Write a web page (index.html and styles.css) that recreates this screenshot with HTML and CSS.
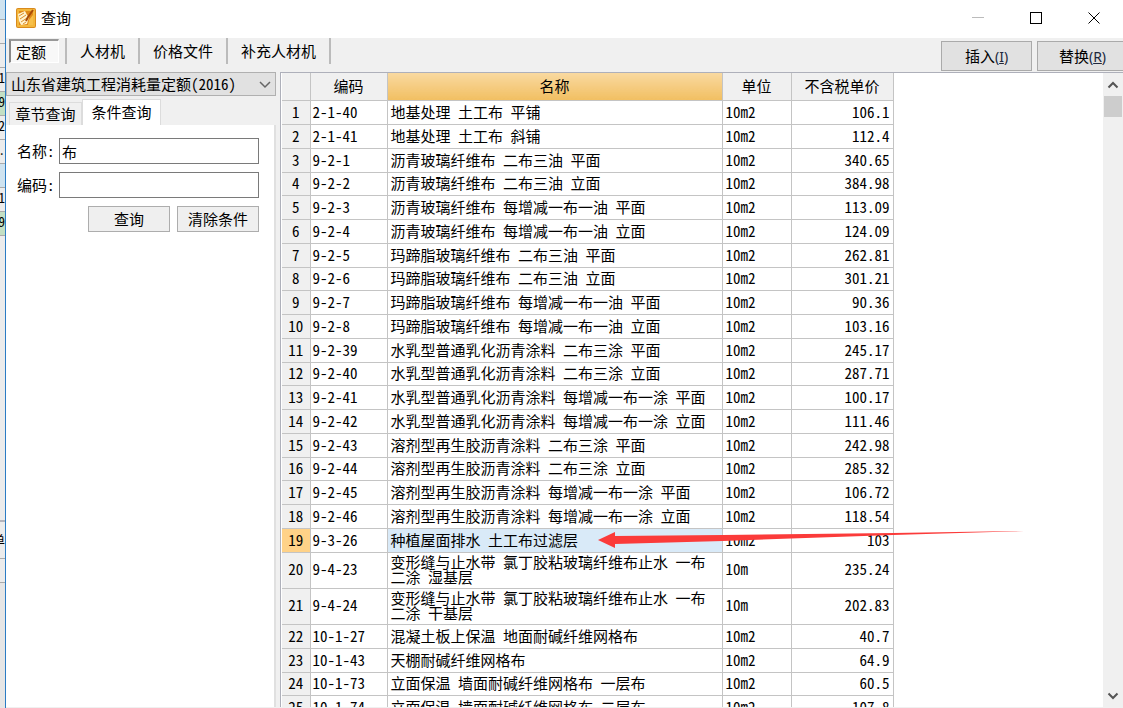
FILE: index.html
```html
<!DOCTYPE html>
<html lang="zh-CN">
<head>
<meta charset="utf-8">
<title>查询</title>
<link rel="stylesheet" href="styles.css">
</head>
<body>
<div class="backdrop" aria-hidden="true">
  <div class="slot blue first"></div>
  <div class="slot"></div>
  <div class="slot"></div>
  <div class="slot">1</div>
  <div class="slot green">9</div>
  <div class="slot">2</div>
  <div class="slot">.</div>
  <div class="slot blue"></div>
  <div class="slot">1</div>
  <div class="slot green">9</div>
  <div class="filler"></div>
  <div class="slot tall">单</div>
  <div class="slot"></div>
  <div class="foot"></div>
</div>
<main class="window">
  <header class="titlebar">
    <svg class="app-icon" viewBox="0 0 20 20">
      <rect x="0" y="0" width="20" height="20" rx="2" fill="#d98a1c"/>
      <rect x="1" y="1" width="18" height="18" rx="1" fill="#f3b73c"/>
      <path d="M3 3H17V17H3Z" fill="#e08a18"/>
      <path d="M2 6L9 3L11 7L13 9L11 16L5 17L3 13Z" fill="#fff3cf"/>
      <path d="M3 8L8 5M4 11L10 7M5 14L11 10M7 16L10 14" stroke="#dc8f2a" stroke-width="1" fill="none"/>
      <path d="M17 2L12 9L10 13" stroke="#a84c08" stroke-width="2" fill="none"/>
      <path d="M13 12L17 7V17H12Z" fill="#f7c04a"/>
    </svg>
    <h1 class="title">查询</h1>
    <div class="controls">
      <button class="control" aria-label="最小化" disabled><svg viewBox="0 0 12 12"><path d="M0 5.500H12" stroke="#bbb"/></svg></button>
      <button class="control" aria-label="最大化"><svg viewBox="0 0 12 12"><rect x=".5" y=".5" width="11" height="11" fill="none" stroke="#000"/></svg></button>
      <button class="control" aria-label="关闭"><svg viewBox="0 0 12 12"><path d="M.5 .5L11.500 11.500M11.500 .5L.5 11.500" stroke="#000"/></svg></button>
    </div>
  </header>
  <nav class="toolbar">
    <div class="modes">
      <button class="mode active">定额</button>
      <button class="mode">人材机</button>
      <button class="mode">价格文件</button>
      <button class="mode">补充人材机</button>
    </div>
    <div class="actions">
      <button class="button action">插入<span class="key">(<u>I</u>)</span></button>
      <button class="button action">替换<span class="key">(<u>R</u>)</span></button>
    </div>
  </nav>
  <div class="content">
    <aside class="side">
      <div class="library">
        <select class="library-select" aria-label="定额库"><option>山东省建筑工程消耗量定额(2016)</option></select>
        <svg class="library-arrow" viewBox="0 0 12 8"><path d="M1 1L6 6L11 1" fill="none" stroke="#666" stroke-width="1.500"/></svg>
      </div>
      <div class="tabs">
        <button class="tab">章节查询</button>
        <button class="tab current">条件查询</button>
      </div>
      <form class="panel">
        <div class="field"><label for="name">名称:</label><input id="name" type="text" value="布"></div>
        <div class="field"><label for="code">编码:</label><input id="code" type="text"></div>
        <div class="form-actions">
          <button type="button" class="button">查询</button>
          <button type="button" class="button">清除条件</button>
        </div>
      </form>
    </aside>
    <section class="results">
      <div class="grid">
        <table class="items">
          <colgroup><col class="c-no"><col class="c-code"><col class="c-name"><col class="c-unit"><col class="c-price"></colgroup>
          <thead><tr><th></th><th>编码</th><th class="sorted">名称</th><th>单位</th><th>不含税单价</th></tr></thead>
          <tbody>
            <tr><th>1</th><td>2-1-40</td><td>地基处理 土工布 平铺</td><td>10m2</td><td>106.1</td></tr>
            <tr><th>2</th><td>2-1-41</td><td>地基处理 土工布 斜铺</td><td>10m2</td><td>112.4</td></tr>
            <tr><th>3</th><td>9-2-1</td><td>沥青玻璃纤维布 二布三油 平面</td><td>10m2</td><td>340.65</td></tr>
            <tr><th>4</th><td>9-2-2</td><td>沥青玻璃纤维布 二布三油 立面</td><td>10m2</td><td>384.98</td></tr>
            <tr><th>5</th><td>9-2-3</td><td>沥青玻璃纤维布 每增减一布一油 平面</td><td>10m2</td><td>113.09</td></tr>
            <tr><th>6</th><td>9-2-4</td><td>沥青玻璃纤维布 每增减一布一油 立面</td><td>10m2</td><td>124.09</td></tr>
            <tr><th>7</th><td>9-2-5</td><td>玛蹄脂玻璃纤维布 二布三油 平面</td><td>10m2</td><td>262.81</td></tr>
            <tr><th>8</th><td>9-2-6</td><td>玛蹄脂玻璃纤维布 二布三油 立面</td><td>10m2</td><td>301.21</td></tr>
            <tr><th>9</th><td>9-2-7</td><td>玛蹄脂玻璃纤维布 每增减一布一油 平面</td><td>10m2</td><td>90.36</td></tr>
            <tr><th>10</th><td>9-2-8</td><td>玛蹄脂玻璃纤维布 每增减一布一油 立面</td><td>10m2</td><td>103.16</td></tr>
            <tr><th>11</th><td>9-2-39</td><td>水乳型普通乳化沥青涂料 二布三涂 平面</td><td>10m2</td><td>245.17</td></tr>
            <tr><th>12</th><td>9-2-40</td><td>水乳型普通乳化沥青涂料 二布三涂 立面</td><td>10m2</td><td>287.71</td></tr>
            <tr><th>13</th><td>9-2-41</td><td>水乳型普通乳化沥青涂料 每增减一布一涂 平面</td><td>10m2</td><td>100.17</td></tr>
            <tr><th>14</th><td>9-2-42</td><td>水乳型普通乳化沥青涂料 每增减一布一涂 立面</td><td>10m2</td><td>111.46</td></tr>
            <tr><th>15</th><td>9-2-43</td><td>溶剂型再生胶沥青涂料 二布三涂 平面</td><td>10m2</td><td>242.98</td></tr>
            <tr><th>16</th><td>9-2-44</td><td>溶剂型再生胶沥青涂料 二布三涂 立面</td><td>10m2</td><td>285.32</td></tr>
            <tr><th>17</th><td>9-2-45</td><td>溶剂型再生胶沥青涂料 每增减一布一涂 平面</td><td>10m2</td><td>106.72</td></tr>
            <tr><th>18</th><td>9-2-46</td><td>溶剂型再生胶沥青涂料 每增减一布一涂 立面</td><td>10m2</td><td>118.54</td></tr>
            <tr class="selected"><th>19</th><td>9-3-26</td><td>种植屋面排水 土工布过滤层</td><td>10m2</td><td>103</td></tr>
            <tr class="double"><th>20</th><td>9-4-23</td><td>变形缝与止水带 氯丁胶粘玻璃纤维布止水 一布二涂 湿基层</td><td>10m</td><td>235.24</td></tr>
            <tr class="double"><th>21</th><td>9-4-24</td><td>变形缝与止水带 氯丁胶粘玻璃纤维布止水 一布二涂 干基层</td><td>10m</td><td>202.83</td></tr>
            <tr><th>22</th><td>10-1-27</td><td>混凝土板上保温 地面耐碱纤维网格布</td><td>10m2</td><td>40.7</td></tr>
            <tr><th>23</th><td>10-1-43</td><td>天棚耐碱纤维网格布</td><td>10m2</td><td>64.9</td></tr>
            <tr><th>24</th><td>10-1-73</td><td>立面保温 墙面耐碱纤维网格布 一层布</td><td>10m2</td><td>60.5</td></tr>
            <tr><th>25</th><td>10-1-74</td><td>立面保温 墙面耐碱纤维网格布 二层布</td><td>10m2</td><td>107.8</td></tr>
          </tbody>
        </table>
      </div>
      <div class="scrollbar">
        <button class="scroll-step" aria-label="向上"><svg viewBox="0 0 12 8"><path d="M1.500 6.500L6 2L10.500 6.500" fill="none" stroke="#555" stroke-width="2"/></svg></button>
        <div class="thumb"></div>
        <button class="scroll-step end" aria-label="向下"><svg viewBox="0 0 12 8"><path d="M1.500 1.500L6 6L10.500 1.500" fill="none" stroke="#555" stroke-width="2"/></svg></button>
      </div>
    </section>
  </div>
</main>
<svg class="pointer" viewBox="0 0 426 18" aria-hidden="true"><path d="M0 9L17 1V5L125 4L295 2L426 0L295 4L125 10L17 13V17Z" fill="#fb3b3a"/></svg>
</body>
</html>
```
FILE: styles.css
```css
* { box-sizing: border-box; }

body {
  margin: 0;
  height: 100vh;
  display: flex;
  position: relative;
  overflow: hidden;
  background: #f0f0f0;
  color: #000;
  font-family: "Noto Sans Mono CJK SC", "Noto Sans CJK SC", "Liberation Mono", monospace;
  font-size: 15px;
  line-height: 20px;
}

button, input, select { font: inherit; color: inherit; margin: 0; border-radius: 0; }
button { padding: 0; border: 0; background: none; }

.backdrop {
  width: 5px;
  flex: none;
  display: flex;
  flex-direction: column;
  overflow: hidden;
  background: #ececec;
  font-size: 13px;
}
.slot {
  height: 24px;
  flex: none;
  display: flex;
  justify-content: flex-end;
  border-bottom: 1px solid #aaa;
  overflow: hidden;
}
.slot.first { height: 20px; }
.slot.blue { background: #cfe3f0; }
.slot.green { background: #c3dfc3; }
.slot.tall { height: 39px; align-items: center; border-top: 2px solid #b4b4bc; }
.filler { height: 284px; flex: none; }
.foot { flex: 1; background: #e6e6e6; }

.window {
  flex: 1;
  min-width: 0;
  display: flex;
  flex-direction: column;
  border-left: 1px solid #2b7cc4;
  background: #f0f0f0;
}

.titlebar {
  height: 38px;
  flex: none;
  display: flex;
  align-items: center;
  padding: 0 0 2px 10px;
  background: #fff;
}
.app-icon { width: 20px; height: 20px; }
.title {
  flex: 1;
  margin: 0 0 0 5px;
  font-size: 15px;
  font-weight: 400;
}
.controls { display: flex; height: 100%; }
.control { width: 58px; display: flex; align-items: center; justify-content: center; }
.control svg { width: 12px; height: 12px; }

.toolbar {
  height: 34px;
  flex: none;
  display: flex;
  justify-content: space-between;
}
.modes { display: flex; height: 26px; }
.mode { padding: 0 13px; border-right: 2px solid #bbb; }
.mode.active {
  margin: 1px 6px 1px 3px;
  padding: 0 12px 0 5px;
  border: 1px solid #fff;
  border-top: 2px solid #999;
  border-left: 2px solid #888;
  background: #f8f8f8;
}
.mode.active + .mode { border-left: 2px solid #bbb; }
.actions { display: flex; gap: 5px; margin-right: -5px; padding-top: 3px; align-items: flex-start; }
.button { border: 1px solid #adadad; background: #efefef; }
.action { width: 91px; height: 30px; background: #e1e1e1; border-color: #aaa; white-space: nowrap; }
.key { font-family: "Noto Sans", sans-serif; font-size: 14px; color: #20283c; }

.content { flex: 1; min-height: 0; display: flex; }

.side { width: 274px; flex: none; display: flex; flex-direction: column; padding-right: 4px; }
.library { position: relative; height: 24px; }
.library-select {
  width: 100%;
  height: 24px;
  padding: 0 22px 0 4px;
  border: 1px solid #b0b0b0;
  background: #e1e1e1;
  appearance: none;
}
.library-arrow { position: absolute; right: 5px; top: 9px; width: 12px; height: 8px; }

.tabs { height: 29px; display: flex; align-items: flex-end; padding: 4px 0 0 3px; }
.tab {
  width: 73px;
  height: 23px;
  border: 1px solid #dcdcdc;
  border-bottom: 0;
  line-height: 20px;
  white-space: nowrap;
}
.tab.current { width: 79px; height: 26px; padding-bottom: 2px; background: #fff; }

.panel {
  flex: 1;
  margin-bottom: 1px;
  padding: 13px 15px 0 11px;
  border-right: 2px solid #e0e0e0;
  background: #fff;
}
.field { display: flex; align-items: center; margin-bottom: 8px; }
.field label { width: 42px; flex: none; white-space: nowrap; }
.field input {
  flex: 1;
  min-width: 0;
  height: 26px;
  padding: 0 2px;
  border: 1px solid #7a7a7a;
  background: #fff;
}
.form-actions { display: flex; justify-content: flex-end; gap: 7px; }
.form-actions .button { width: 82px; height: 26px; line-height: 20px; }

.results {
  flex: 1;
  min-width: 0;
  display: flex;
  margin-bottom: 1px;
  border-top: 1px solid #aeb0ba;
  border-left: 1px solid #aeb0ba;
  background: #fff;
}
.grid { flex: 1; min-width: 0; overflow: hidden; padding-left: 1px; }
.items { width: 611px; table-layout: fixed; border-collapse: collapse; }
.c-no { width: 28px; }
.c-code { width: 77px; }
.c-name { width: 335px; }
.c-unit { width: 69px; }
.c-price { width: 102px; }
.items th, .items td {
  height: 24px;
  padding: 0 3px 2px;
  border: 1px solid #c4c4c4;
  line-height: 15px;
  font-weight: 400;
  text-align: left;
}
.items tbody tr:nth-child(4n):not(.double) > * { height: 23px; }
.items th { background: #f0f0f0; text-align: center; padding: 0 0 2px; }
.items thead th { height: 27px; border-top: 0; }
.items th:first-child { border-left: 0; }
.items thead .sorted { background: linear-gradient(#f9d9a0, #f1bf62); }
.items td:nth-child(2) { padding-left: 2px; }
.items td:last-child { text-align: right; }
.items tbody .double > * { height: 36px; padding-bottom: 3px; }
.items .selected th { background: #ffd288; }
.items .selected td:nth-child(3) { background: #d9eaf8; }

.scrollbar {
  width: 20px;
  flex: none;
  display: flex;
  flex-direction: column;
  align-items: center;
  background: #f0f0f0;
}
.scroll-step { width: 100%; height: 23px; display: flex; align-items: center; justify-content: center; }
.scroll-step svg { width: 12px; height: 8px; }
.scroll-step.end { margin-top: auto; }
.thumb { width: 18px; height: 21px; background: #cdcdcd; }

.pointer { position: absolute; left: 598px; top: 531px; width: 426px; height: 18px; }
```
